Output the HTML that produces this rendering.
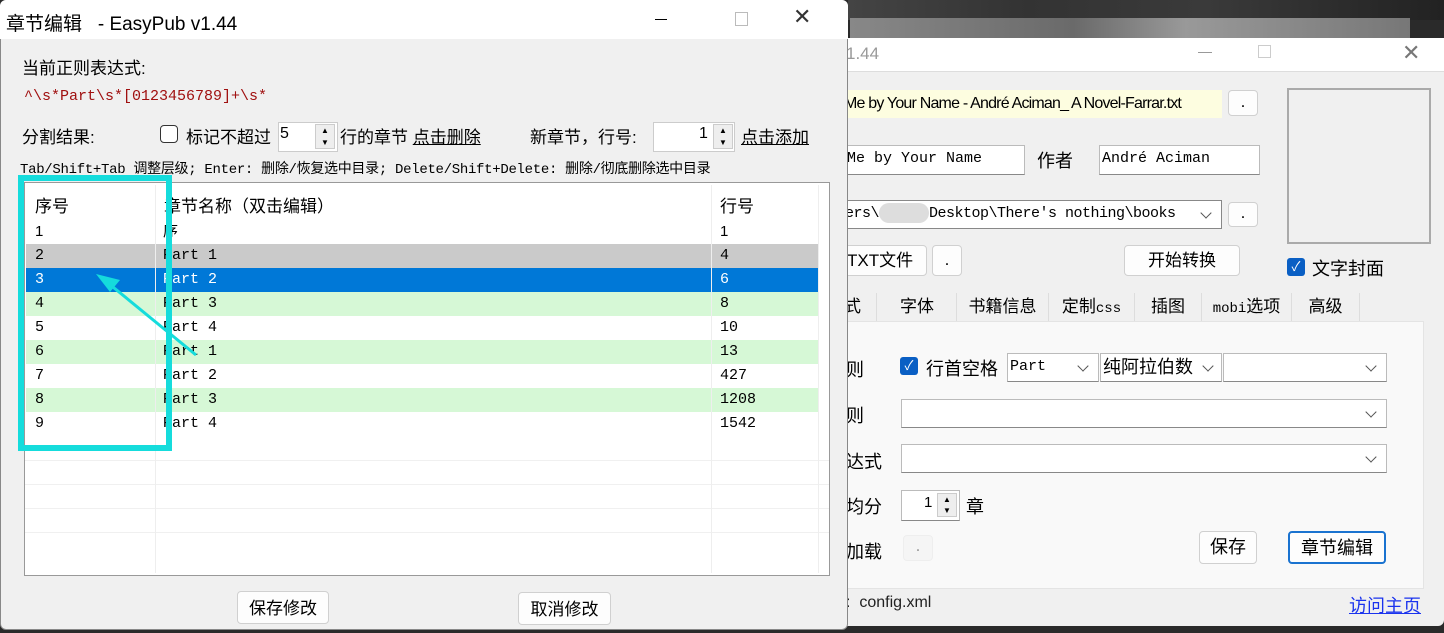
<!DOCTYPE html>
<html><head><meta charset="utf-8"><style>
*{box-sizing:border-box;margin:0;padding:0}
body{width:1444px;height:633px;overflow:hidden;background:#2a2a2a;position:relative;font-family:"Liberation Sans","Noto Sans CJK SC",sans-serif;font-size:16px;color:#000}
.a{position:absolute}
.mono{font-family:"Liberation Mono","Noto Sans CJK SC",monospace}
.btn{position:absolute;background:#fdfdfd;border:1px solid #d0d0d0;border-radius:4px;text-align:center;font-size:17px}
.inp{position:absolute;background:#fff;border:1px solid #bbb;border-bottom:1px solid #888}
.chev{position:absolute;width:8px;height:8px;border-right:1.5px solid #555;border-bottom:1.5px solid #555;transform:rotate(45deg)}
.cb{position:absolute;width:18px;height:18px;background:#0a5fc4;border-radius:3px;color:#fff;font-size:13px;text-align:center;line-height:18px}
.row{position:absolute;left:26px;width:792px;height:24px;font-size:15px;line-height:24px}
.row span{position:absolute}
.tab{position:absolute;top:0;text-align:center;border-right:1px solid #ddd}
</style></head><body>
<div class="a" style="left:848px;top:0;width:596px;height:20px;background:linear-gradient(90deg,#444,#333 30%,#3a3a3a 60%,#222)"></div>
<div class="a" style="left:850px;top:18px;width:560px;height:22px;background:linear-gradient(90deg,#888,#6a6a6a 40%,#999 60%,#777)"></div>
<div class="a" style="left:840px;top:38px;width:604px;height:588px;background:#f0f0f0;border-radius:0 0 6px 0"></div>
<div class="a" style="left:840px;top:38px;width:604px;height:34px;background:#fff;border-bottom:1px solid #ddd"></div>
<div class="a" style="left:846px;top:44px;color:#999;font-size:17px">1.44</div>
<div class="a" style="left:1198px;top:52px;width:14px;border-top:1px solid #999"></div>
<div class="a" style="left:1258px;top:45px;width:13px;height:13px;border:1px solid #ccc"></div>
<div class="a" style="left:1402px;top:40px;color:#777;font-size:22px">✕</div>
<div class="inp" style="left:844px;top:90px;width:378px;height:28px;background:#fdfde0;border:none;font-size:16px;line-height:28px;white-space:nowrap;overflow:hidden;letter-spacing:-0.8px">Me by Your Name - André Aciman_ A Novel-Farrar.txt</div>
<div class="btn" style="left:1228px;top:90px;width:30px;height:26px;line-height:22px">.</div>
<div class="a" style="left:1287px;top:88px;width:144px;height:156px;border:2px solid #aaa;background:#f0f0f0"></div>
<div class="inp mono" style="left:844px;top:145px;width:181px;height:30px;font-size:15px;line-height:26px;padding-left:2px">Me by Your Name</div>
<div class="a" style="left:1037px;top:147px;font-size:18px">作者</div>
<div class="inp mono" style="left:1099px;top:145px;width:161px;height:30px;font-size:15px;line-height:26px;padding-left:2px">André Aciman</div>
<div class="inp mono" style="left:844px;top:200px;width:378px;height:29px;font-size:15px;line-height:26px;white-space:nowrap;overflow:hidden;border:1px solid #888;letter-spacing:-0.5px">ers\<span style="display:inline-block;width:50px;background:#ddd;height:20px;vertical-align:middle;border-radius:10px"></span>Desktop\There's nothing\books</div>
<div class="a" style="left:1192px;top:201px;width:28px;height:26px;background:#fff"></div>
<div class="chev" style="left:1202px;top:209px"></div>
<div class="btn" style="left:1228px;top:202px;width:30px;height:25px;line-height:20px">.</div>
<div class="btn" style="left:844px;top:245px;width:83px;height:31px;line-height:30px;text-align:left;padding-left:2px">TXT文件</div>
<div class="btn" style="left:932px;top:245px;width:30px;height:31px;line-height:28px">.</div>
<div class="btn" style="left:1124px;top:245px;width:116px;height:31px;line-height:30px">开始转换</div>
<div class="cb" style="left:1287px;top:258px">✓</div>
<div class="a" style="left:1312px;top:255px;font-size:18px">文字封面</div>
<div class="a" style="left:844px;top:293px;width:606px;height:28px;font-size:17px;line-height:28px">
<span class="tab" style="left:0;width:33px;text-align:left">式</span>
<span class="tab" style="left:34px;width:79px">字体</span>
<span class="tab" style="left:113px;width:92px">书籍信息</span>
<span class="tab" style="left:205px;width:86px">定制<span class="mono" style="font-size:14px">css</span></span>
<span class="tab" style="left:291px;width:67px">插图</span>
<span class="tab" style="left:358px;width:90px"><span class="mono" style="font-size:14px">mobi</span>选项</span>
<span class="tab" style="left:448px;width:68px">高级</span>
</div>
<div class="a" style="left:844px;top:321px;width:580px;height:268px;background:#f9f9f9;border:1px solid #e4e4e4"></div>
<div class="a" style="left:846px;top:356px;font-size:18px">则</div>
<div class="cb" style="left:900px;top:357px">✓</div>
<div class="a" style="left:926px;top:355px;font-size:18px">行首空格</div>
<div class="inp mono" style="left:1007px;top:353px;width:92px;height:29px;font-size:15px;line-height:26px;padding-left:2px">Part</div><div class="chev" style="left:1079px;top:362px"></div>
<div class="inp" style="left:1100px;top:353px;width:122px;height:29px;font-size:18px;line-height:26px;padding-left:2px">纯阿拉伯数</div><div class="chev" style="left:1204px;top:362px"></div>
<div class="inp" style="left:1223px;top:353px;width:164px;height:29px"></div><div class="chev" style="left:1367px;top:362px"></div>
<div class="a" style="left:846px;top:402px;font-size:18px">则</div>
<div class="inp" style="left:901px;top:399px;width:486px;height:29px"></div><div class="chev" style="left:1367px;top:408px"></div>
<div class="a" style="left:846px;top:448px;font-size:18px">达式</div>
<div class="inp" style="left:901px;top:444px;width:486px;height:29px"></div><div class="chev" style="left:1367px;top:453px"></div>
<div class="a" style="left:846px;top:493px;font-size:18px">均分</div>
<div class="inp" style="left:901px;top:490px;width:59px;height:31px;font-size:15px;padding:3px 0 0 22px">1</div>
<div class="a" style="left:937px;top:493px;width:20px;height:24px;background:#eee;border:1px solid #ccc;font-size:8px;text-align:center;line-height:11px">▲<br>▼</div>
<div class="a" style="left:966px;top:493px;font-size:18px">章</div>
<div class="a" style="left:846px;top:538px;font-size:18px">加载</div>
<div class="btn" style="left:903px;top:535px;width:30px;height:26px;border-color:#eee;background:#f5f5f5;color:#999">.</div>
<div class="btn" style="left:1199px;top:531px;width:58px;height:33px;line-height:31px;font-size:18px">保存</div>
<div class="btn" style="left:1288px;top:531px;width:98px;height:33px;line-height:31px;font-size:18px;border:2px solid #1a73d0">章节编辑</div>
<div class="a" style="left:846px;top:594px;font-size:16px;color:#222">:&nbsp; config.xml</div>
<div class="a" style="left:1349px;top:592px;font-size:18px;color:#1a33ee;text-decoration:underline">访问主页</div>

<div class="a" style="left:0;top:0;width:848px;height:630px;background:#f0f0f0;border-radius:6px;border:1px solid #888"></div>
<div class="a" style="left:0;top:0;width:848px;height:39px;background:#fff;border-radius:6px 6px 0 0"></div>
<div class="a" style="left:6px;top:9px;font-size:19px">章节编辑&nbsp;&nbsp; - EasyPub v1.44</div>
<div class="a" style="left:655px;top:19px;width:12px;border-top:1px solid #000"></div>
<div class="a" style="left:735px;top:12px;width:13px;height:14px;border:1px solid #bbb"></div>
<div class="a" style="top:4px;font-size:22px;left:793px;color:#333">✕</div>
<div class="a" style="left:22px;top:54px;font-size:17px">当前正则表达式:</div>
<div class="a mono" style="left:24px;top:88px;font-size:15px;color:#a01010">^\s*Part\s*[0123456789]+\s*</div>
<div class="a" style="left:22px;top:123px;font-size:17px">分割结果:</div>
<div class="a" style="left:160px;top:125px;width:18px;height:18px;border:1px solid #333;border-radius:4px;background:#fff"></div>
<div class="a" style="left:186px;top:123px;font-size:17px">标记不超过</div>
<div class="inp" style="left:278px;top:122px;width:60px;height:30px;font-size:15px;padding:3px 2px;border:1px solid #ccc"></div>
<div class="a" style="left:280px;top:125px;font-size:16px">5</div>
<div class="a" style="left:315px;top:124px;width:20px;height:25px;background:#eee;border:1px solid #ccc;font-size:8px;text-align:center;line-height:12px">▲<br>▼</div>
<div class="a" style="left:340px;top:123px;font-size:17px">行的章节 <u>点击删除</u></div>
<div class="a" style="left:530px;top:123px;font-size:17px">新章节，行号:</div>
<div class="inp" style="left:653px;top:122px;width:82px;height:30px;border:1px solid #ccc"></div>
<div class="a" style="left:699px;top:125px;font-size:16px">1</div>
<div class="a" style="left:713px;top:124px;width:20px;height:25px;background:#eee;border:1px solid #ccc;font-size:8px;text-align:center;line-height:12px">▲<br>▼</div>
<div class="a" style="left:741px;top:123px;font-size:17px"><u>点击添加</u></div>
<div class="a mono" style="left:20px;top:158px;font-size:14px;white-space:nowrap;letter-spacing:-0.3px">Tab/Shift+Tab 调整层级; Enter: 删除/恢复选中目录; Delete/Shift+Delete: 删除/彻底删除选中目录</div>
<div class="a" style="left:24px;top:182px;width:806px;height:394px;background:#fff;border:1px solid #999"></div>
<div class="a" style="left:35px;top:192px;font-size:17px">序号</div>
<div class="a" style="left:164px;top:192px;font-size:17px">章节名称（双击编辑）</div>
<div class="a" style="left:720px;top:192px;font-size:17px">行号</div>
<div class="row" style="top:220px"><span style="left:9px">1</span><span style="left:137px">序</span><span style="left:694px">1</span></div>
<div class="row mono" style="top:244px;background:#cacaca;text-decoration:line-through"><span style="left:9px">2</span><span style="left:137px">Part 1</span><span style="left:694px">4</span></div>
<div class="row mono" style="top:268px;background:#0078d7;color:#fff;text-decoration:line-through"><span style="left:9px">3</span><span style="left:137px">Part 2</span><span style="left:694px">6</span></div>
<div class="row mono" style="top:292px;background:#d6f8d6"><span style="left:9px">4</span><span style="left:137px">Part 3</span><span style="left:694px">8</span></div>
<div class="row mono" style="top:316px"><span style="left:9px">5</span><span style="left:137px">Part 4</span><span style="left:694px">10</span></div>
<div class="row mono" style="top:340px;background:#d6f8d6"><span style="left:9px">6</span><span style="left:137px">Part 1</span><span style="left:694px">13</span></div>
<div class="row mono" style="top:364px"><span style="left:9px">7</span><span style="left:137px">Part 2</span><span style="left:694px">427</span></div>
<div class="row mono" style="top:388px;background:#d6f8d6"><span style="left:9px">8</span><span style="left:137px">Part 3</span><span style="left:694px">1208</span></div>
<div class="row mono" style="top:412px"><span style="left:9px">9</span><span style="left:137px">Part 4</span><span style="left:694px">1542</span></div>
<div class="a" style="left:25px;top:460px;width:804px;height:96px;background:repeating-linear-gradient(180deg,#f0f0f0 0 1px,transparent 1px 24px)"></div>
<div class="a" style="left:155px;top:185px;width:1px;height:388px;background:#eee"></div>
<div class="a" style="left:711px;top:185px;width:1px;height:388px;background:#eee"></div>
<div class="a" style="left:818px;top:185px;width:1px;height:388px;background:#eee"></div>
<div class="a" style="left:18px;top:175px;width:154px;height:276px;border:6px solid #15dcdc"></div>
<svg class="a" style="left:0;top:0" width="300" height="400"><line x1="196" y1="355" x2="108" y2="283" stroke="#15dcdc" stroke-width="3"/><polygon points="96,274 120,280 110,292" fill="#15dcdc"/></svg>
<div class="btn" style="left:237px;top:591px;width:92px;height:33px;line-height:33px">保存修改</div>
<div class="btn" style="left:518px;top:592px;width:93px;height:33px;line-height:33px">取消修改</div>
</body></html>
